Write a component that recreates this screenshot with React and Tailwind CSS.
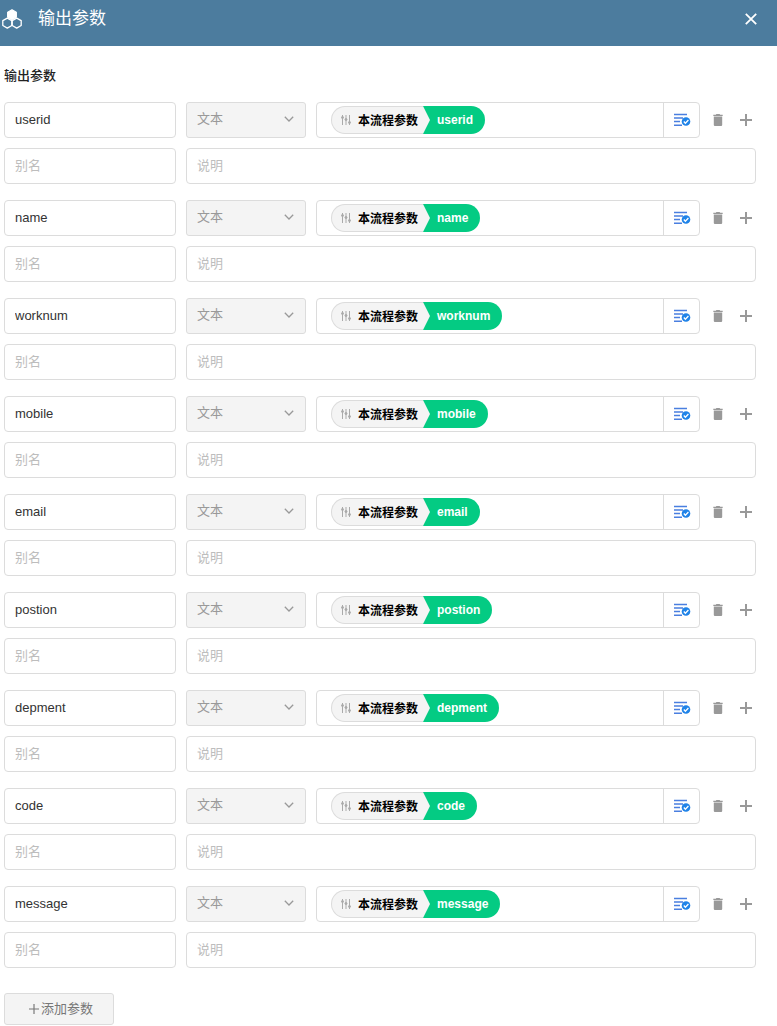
import React from "react";

const PARAMS = ["userid", "name", "worknum", "mobile", "email", "postion", "depment", "code", "message"];

const FIELD =
  "h-9 rounded border border-[#dcdcdc] bg-white px-2.5 pb-0.5 text-[13px] text-[#333] outline-none placeholder:text-[#bdbdbd] focus:border-[#2196f3]";

function HexagonsIcon() {
  return (
    <svg className="h-5 w-5" viewBox="0 0 20 20" fill="none" stroke="#fff" strokeWidth="1.3" strokeLinejoin="round" aria-hidden="true">
      <path fill="#fff" d="M10 0.8l4.3 2.4v4.9L10 10.5 5.7 8.1V3.2z" />
      <path d="M5.3 9.1l4.5 2.5v4.9l-4.5 2.6-4.5-2.6v-4.9z" />
      <path d="M14.7 9.1l4.5 2.5v4.9l-4.5 2.6-4.5-2.6v-4.9z" />
    </svg>
  );
}

function CloseIcon() {
  return (
    <svg className="h-3 w-3" viewBox="0 0 12 12" stroke="#fff" strokeWidth="1.8" aria-hidden="true">
      <path d="M.8.8l10.4 10.4M11.2.8L.8 11.2" />
    </svg>
  );
}

function SlidersIcon() {
  return (
    <svg className="h-3 w-3 shrink-0" viewBox="0 0 12 12" fill="#aaa" stroke="#aaa" strokeWidth="1" aria-hidden="true">
      <path d="M2.5 1v10M6 1v10M9.5 1v10" />
      <circle cx="2.5" cy="3.5" r="1" />
      <circle cx="6" cy="5.5" r="1" />
      <circle cx="9.5" cy="8.5" r="1" />
    </svg>
  );
}

function PickIcon() {
  return (
    <svg className="h-4 w-[18px]" viewBox="0 0 18 16" fill="none" aria-hidden="true">
      <path stroke="#4a7fe0" strokeWidth="1.4" d="M1 2.5h13M1 6h9M1 9.5h6M1 13.3h8" />
      <circle cx="13" cy="9.5" r="4.3" fill="#1f83e8" />
      <path stroke="#fff" strokeWidth="1.3" d="M10.8 9.5l1.6 1.7 3-3.2" />
    </svg>
  );
}

function TrashIcon() {
  return (
    <svg className="h-3 w-2.5" viewBox="0 0 10 12" fill="#999" aria-hidden="true">
      <path d="M.3.8h2.5L3.4 0h3.2l.6.8h2.5V2H.3zM.8 2.6h8.4v8.3q0 1.1-1.1 1.1H1.9Q.8 12 .8 10.9z" />
    </svg>
  );
}

function PlusIcon({ className }) {
  return (
    <svg className={className} viewBox="0 0 12 12" stroke="currentColor" aria-hidden="true">
      <path d="M6 0v12M0 6h12" />
    </svg>
  );
}

function Tag({ name }) {
  return (
    <span className="flex h-7 text-xs font-bold">
      <span className="flex items-center gap-1.5 rounded-l-full border border-r-0 border-[#dcdcdc] bg-[#f4f4f4] pr-[5px] pl-2">
        <SlidersIcon />
        <span className="pt-0.5 whitespace-nowrap text-black">本流程参数</span>
      </span>
      <b className="flex items-center rounded-r-full bg-[#04cb83] pr-3 text-white">
        <svg className="mr-[7px] h-7 w-[7px]" viewBox="0 0 7 28" fill="#f4f4f4" aria-hidden="true">
          <path d="M0 0l7 14-7 14z" />
        </svg>
        {name}
      </b>
    </span>
  );
}

function ParamGroup({ name }) {
  return (
    <div className="flex flex-col gap-2.5">
      <div className="flex items-center gap-2.5">
        <input className={`${FIELD} w-[172px]`} aria-label="参数名" defaultValue={name} />
        <div className="relative w-[120px]">
          <select
            disabled
            aria-label={`${name} 类型`}
            className="block h-9 w-full appearance-none rounded-[3px] border border-[#dcdcdc] bg-[#f4f4f4] px-2.5 pb-0.5 text-[13px] text-[#999] opacity-100"
          >
            <option>文本</option>
          </select>
          <svg className="pointer-events-none absolute top-3.5 right-3 h-1.5 w-2.5" viewBox="0 0 10 6" fill="none" stroke="#999" strokeWidth="1.3" aria-hidden="true">
            <path d="M.8.8L5 5 9.2.8" />
          </svg>
        </div>
        <div className="flex flex-1 items-center">
          <div className="flex h-9 flex-1 rounded border border-[#dcdcdc]">
            <div className="flex flex-1 items-center px-3.5">
              <Tag name={name} />
            </div>
            <button type="button" aria-label="选择值" className="flex w-9 items-center justify-center border-l border-[#dcdcdc]">
              <PickIcon />
            </button>
          </div>
          <button type="button" aria-label="删除" className="ml-1 flex h-7 w-7 items-center justify-center">
            <TrashIcon />
          </button>
          <button type="button" aria-label="添加" className="-mr-1 flex h-7 w-7 items-center justify-center text-[#999]">
            <PlusIcon className="h-3 w-3 stroke-2" />
          </button>
        </div>
      </div>
      <div className="flex gap-2.5">
        <input className={`${FIELD} w-[172px]`} aria-label={`${name} 别名`} placeholder="别名" />
        <input className={`${FIELD} min-w-0 flex-1`} aria-label={`${name} 说明`} placeholder="说明" />
      </div>
    </div>
  );
}

export default function App() {
  return (
    <div className="bg-white font-['Liberation_Sans','Noto_Sans_CJK_SC',sans-serif] text-[#333]">
      <header className="flex h-[46px] items-center bg-[#4c7c9e] pr-5 pb-2 pl-0.5">
        <HexagonsIcon />
        <h1 className="ml-4 flex-1 text-[17px] leading-6 text-white">输出参数</h1>
        <button type="button" aria-label="关闭">
          <CloseIcon />
        </button>
      </header>
      <main className="pt-5 pr-[21px] pb-px pl-1">
        <h2 className="mb-4 text-[13px] leading-5 font-medium text-[#222]">输出参数</h2>
        <div className="flex flex-col gap-4">
          {PARAMS.map((name) => (
            <ParamGroup key={name} name={name} />
          ))}
        </div>
        <button
          type="button"
          className="mt-[25px] flex h-8 w-[110px] items-center justify-center gap-0.5 rounded-[3px] border border-[#dcdcdc] bg-[#f4f4f4] pl-1 text-[13px] text-[#777]"
        >
          <PlusIcon className="h-2.5 w-2.5 stroke-[1.4]" />
          添加参数
        </button>
      </main>
    </div>
  );
}
